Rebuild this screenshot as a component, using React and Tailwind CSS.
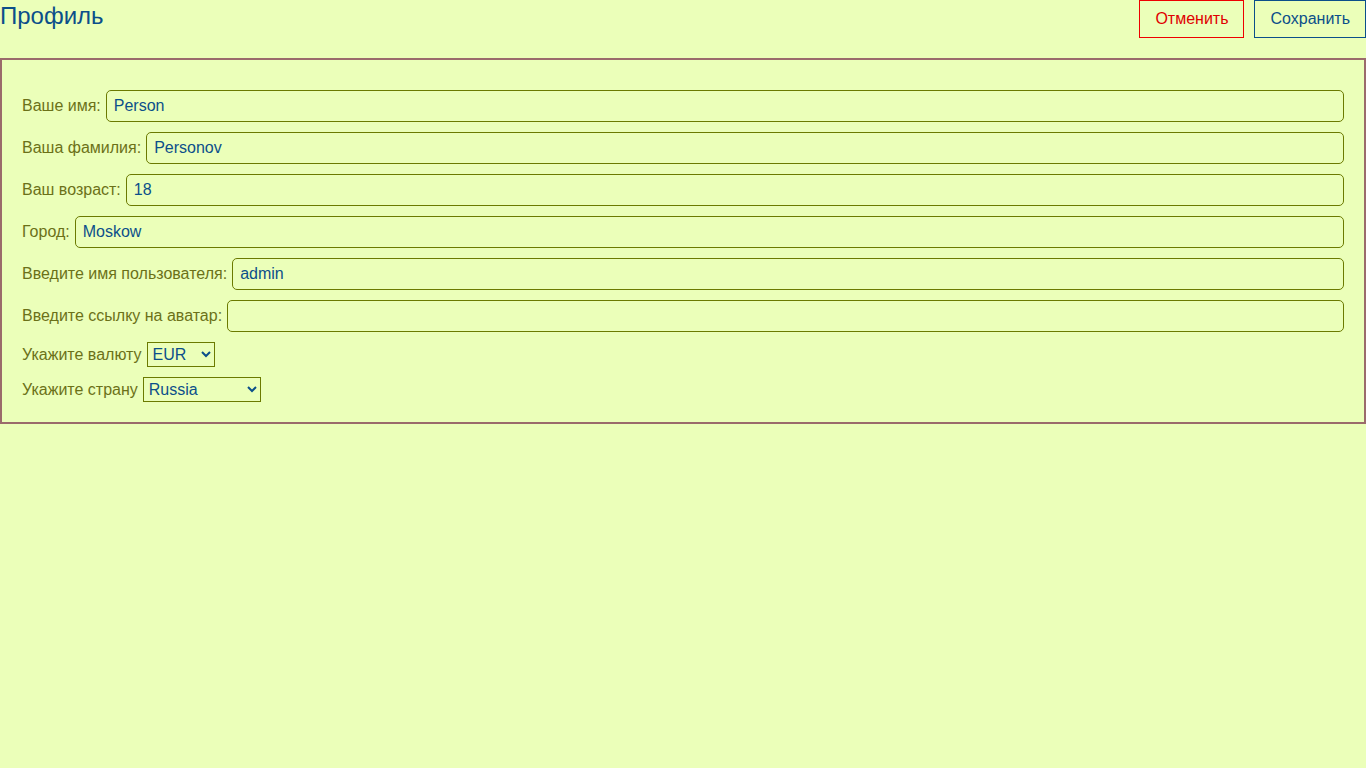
import React, { useState } from "react";

const fields = [
    { label: "Ваше имя:", value: "Person" },
    { label: "Ваша фамилия:", value: "Personov" },
    { label: "Ваш возраст:", value: "18" },
    { label: "Город:", value: "Moskow" },
    { label: "Введите имя пользователя:", value: "admin" },
    { label: "Введите ссылку на аватар:", value: "" },
];

export default function App() {
    const [values, setValues] = useState(fields.map((f) => f.value));
    const [currency, setCurrency] = useState("EUR");
    const [country, setCountry] = useState("Russia");

    const update = (index, value) => {
        const next = [...values];
        next[index] = value;
        setValues(next);
    };

    return (
        <div
            className="min-h-screen bg-[#ebffb9] text-base"
            style={{ fontFamily: '"Liberation Sans", Arial, sans-serif' }}
        >
            {/* header */}
            <div className="flex justify-between items-start">
                <h1 className="text-[24px] leading-[32px] text-[#0b4f8a]">Профиль</h1>
                <div className="flex gap-[10px]">
                    <button className="h-[38px] px-[15px] border border-solid border-[color:#ee0000] text-[#e00000]">
                        Отменить
                    </button>
                    <button className="h-[38px] px-[15px] border border-solid border-[color:#0b4f8a] text-[#0b4f8a]">
                        Сохранить
                    </button>
                </div>
            </div>

            {/* form panel */}
            <div className="mt-[20px] border-2 border-[#9a6b6b] px-[20px] pt-[30px] pb-[20px]">
                <div className="flex flex-col gap-[10px]">
                    {fields.map((f, index) => (
                        <div key={index} className="flex items-center">
                            <label className="text-[#6b7118] mr-[5px] whitespace-nowrap">{f.label}</label>
                            <input
                                type="text"
                                className="flex-1 h-[32px] border border-[#6b7a00] rounded-[5px] px-[7px] text-[#0b4f8a] outline-none"
                                value={values[index]}
                                onChange={(e) => update(index, e.target.value)}
                            />
                        </div>
                    ))}
                    <div className="flex items-center">
                        <label className="text-[#6b7118] mr-[5px]">Укажите валюту</label>
                        <select
                            className="h-[25px] w-[68px] border border-[#6b7a00] text-[#0b4f8a] pl-[1px]"
                            value={currency}
                            onChange={(e) => setCurrency(e.target.value)}
                        >
                            <option>EUR</option>
                            <option>USD</option>
                            <option>RUB</option>
                        </select>
                    </div>
                    <div className="flex items-center">
                        <label className="text-[#6b7118] mr-[5px]">Укажите страну</label>
                        <select
                            className="h-[25px] w-[118px] border border-[#6b7a00] text-[#0b4f8a] pl-[1px]"
                            value={country}
                            onChange={(e) => setCountry(e.target.value)}
                        >
                            <option>Russia</option>
                            <option>Germany</option>
                            <option>France</option>
                        </select>
                    </div>
                </div>
            </div>
        </div>
    );
}
